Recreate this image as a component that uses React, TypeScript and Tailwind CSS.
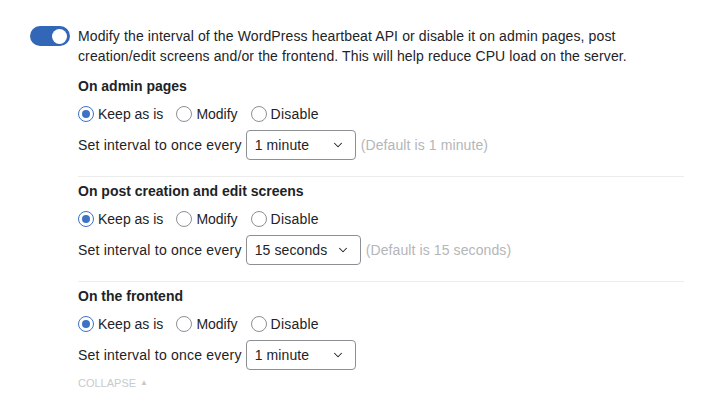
import { ChevronDown } from 'lucide-react';

type Section = {
  title: string;
  value: string;
  width: string;
  note?: string;
};

const SECTIONS: Section[] = [
  { title: 'On admin pages', value: '1 minute', width: 'w-[110px]', note: '(Default is 1 minute)' },
  { title: 'On post creation and edit screens', value: '15 seconds', width: 'w-[115px]', note: '(Default is 15 seconds)' },
  { title: 'On the frontend', value: '1 minute', width: 'w-[110px]' },
];

const OPTIONS = ['Keep as is', 'Modify', 'Disable'];

function Radio({ checked }: { checked: boolean }) {
  return (
    <span
      className={`flex h-4 w-4 shrink-0 items-center justify-center rounded-full border bg-white ${
        checked ? 'border-[#3d72c4]' : 'border-[#8c8f94]'
      }`}
    >
      {checked && <span className="h-[8px] w-[8px] rounded-full bg-[#3d72c4]" />}
    </span>
  );
}

function Block({ s, last }: { s: Section; last: boolean }) {
  return (
    <div className={`flex flex-col ${last ? '' : 'border-b border-[#ececec] pb-4'}`}>
      <div className="h-5 font-semibold leading-5">{s.title}</div>
      <div className="mt-2 flex h-5 items-center gap-[13px]">
        {OPTIONS.map((o, i) => (
          <label key={o} className="flex items-center gap-1">
            <Radio checked={i === 0} />
            <span className={i === 2 ? 'tracking-[0.2px]' : ''}>{o}</span>
          </label>
        ))}
      </div>
      <div className="mt-[6px] flex h-[30px] items-center">
        <span className="tracking-[0.22px]">Set interval to once every</span>
        <div
          className={`ml-1 flex h-[30px] ${s.width} items-center justify-between rounded-[4px] border border-[#8c8f94] bg-white pl-2 pr-[10px]`}
        >
          <span className="tracking-[0.1px]">{s.value}</span>
          <ChevronDown className="h-[14px] w-[14px] text-[#1d2327]" strokeWidth={1.8} />
        </div>
        {s.note && <span className="ml-[5px] tracking-[0.1px] text-[#b4b6b9]">{s.note}</span>}
      </div>
    </div>
  );
}

export default function App() {
  return (
    <div className="min-h-[402px] w-[711px] bg-white pl-[30px] pt-[26px] font-['Liberation_Sans',Arial,sans-serif] text-[14px] leading-5 text-[#1d2327]">
      <div className="flex gap-2">
        <div className="flex h-5 w-10 shrink-0 items-center justify-end rounded-full bg-[#3267b7] pr-[3px]">
          <span className="h-[15px] w-[15px] rounded-full bg-white" />
        </div>
        <div className="flex w-[606px] flex-col">
          <p className="tracking-[0.12px]">
            Modify the interval of the WordPress heartbeat API or disable it on admin pages, post
            creation/edit screens and/or the frontend. This will help reduce CPU load on the server.
          </p>
          <div className="mt-[10px] flex flex-col gap-1">
            {SECTIONS.map((s, i) => (
              <Block key={s.title} s={s} last={i === SECTIONS.length - 1} />
            ))}
          </div>
          <div className="mt-[5px] flex items-center gap-1 text-[11px] uppercase leading-4 text-[#c8cacc]">
            Collapse
            <span className="text-[8px]">▲</span>
          </div>
        </div>
      </div>
    </div>
  );
}
